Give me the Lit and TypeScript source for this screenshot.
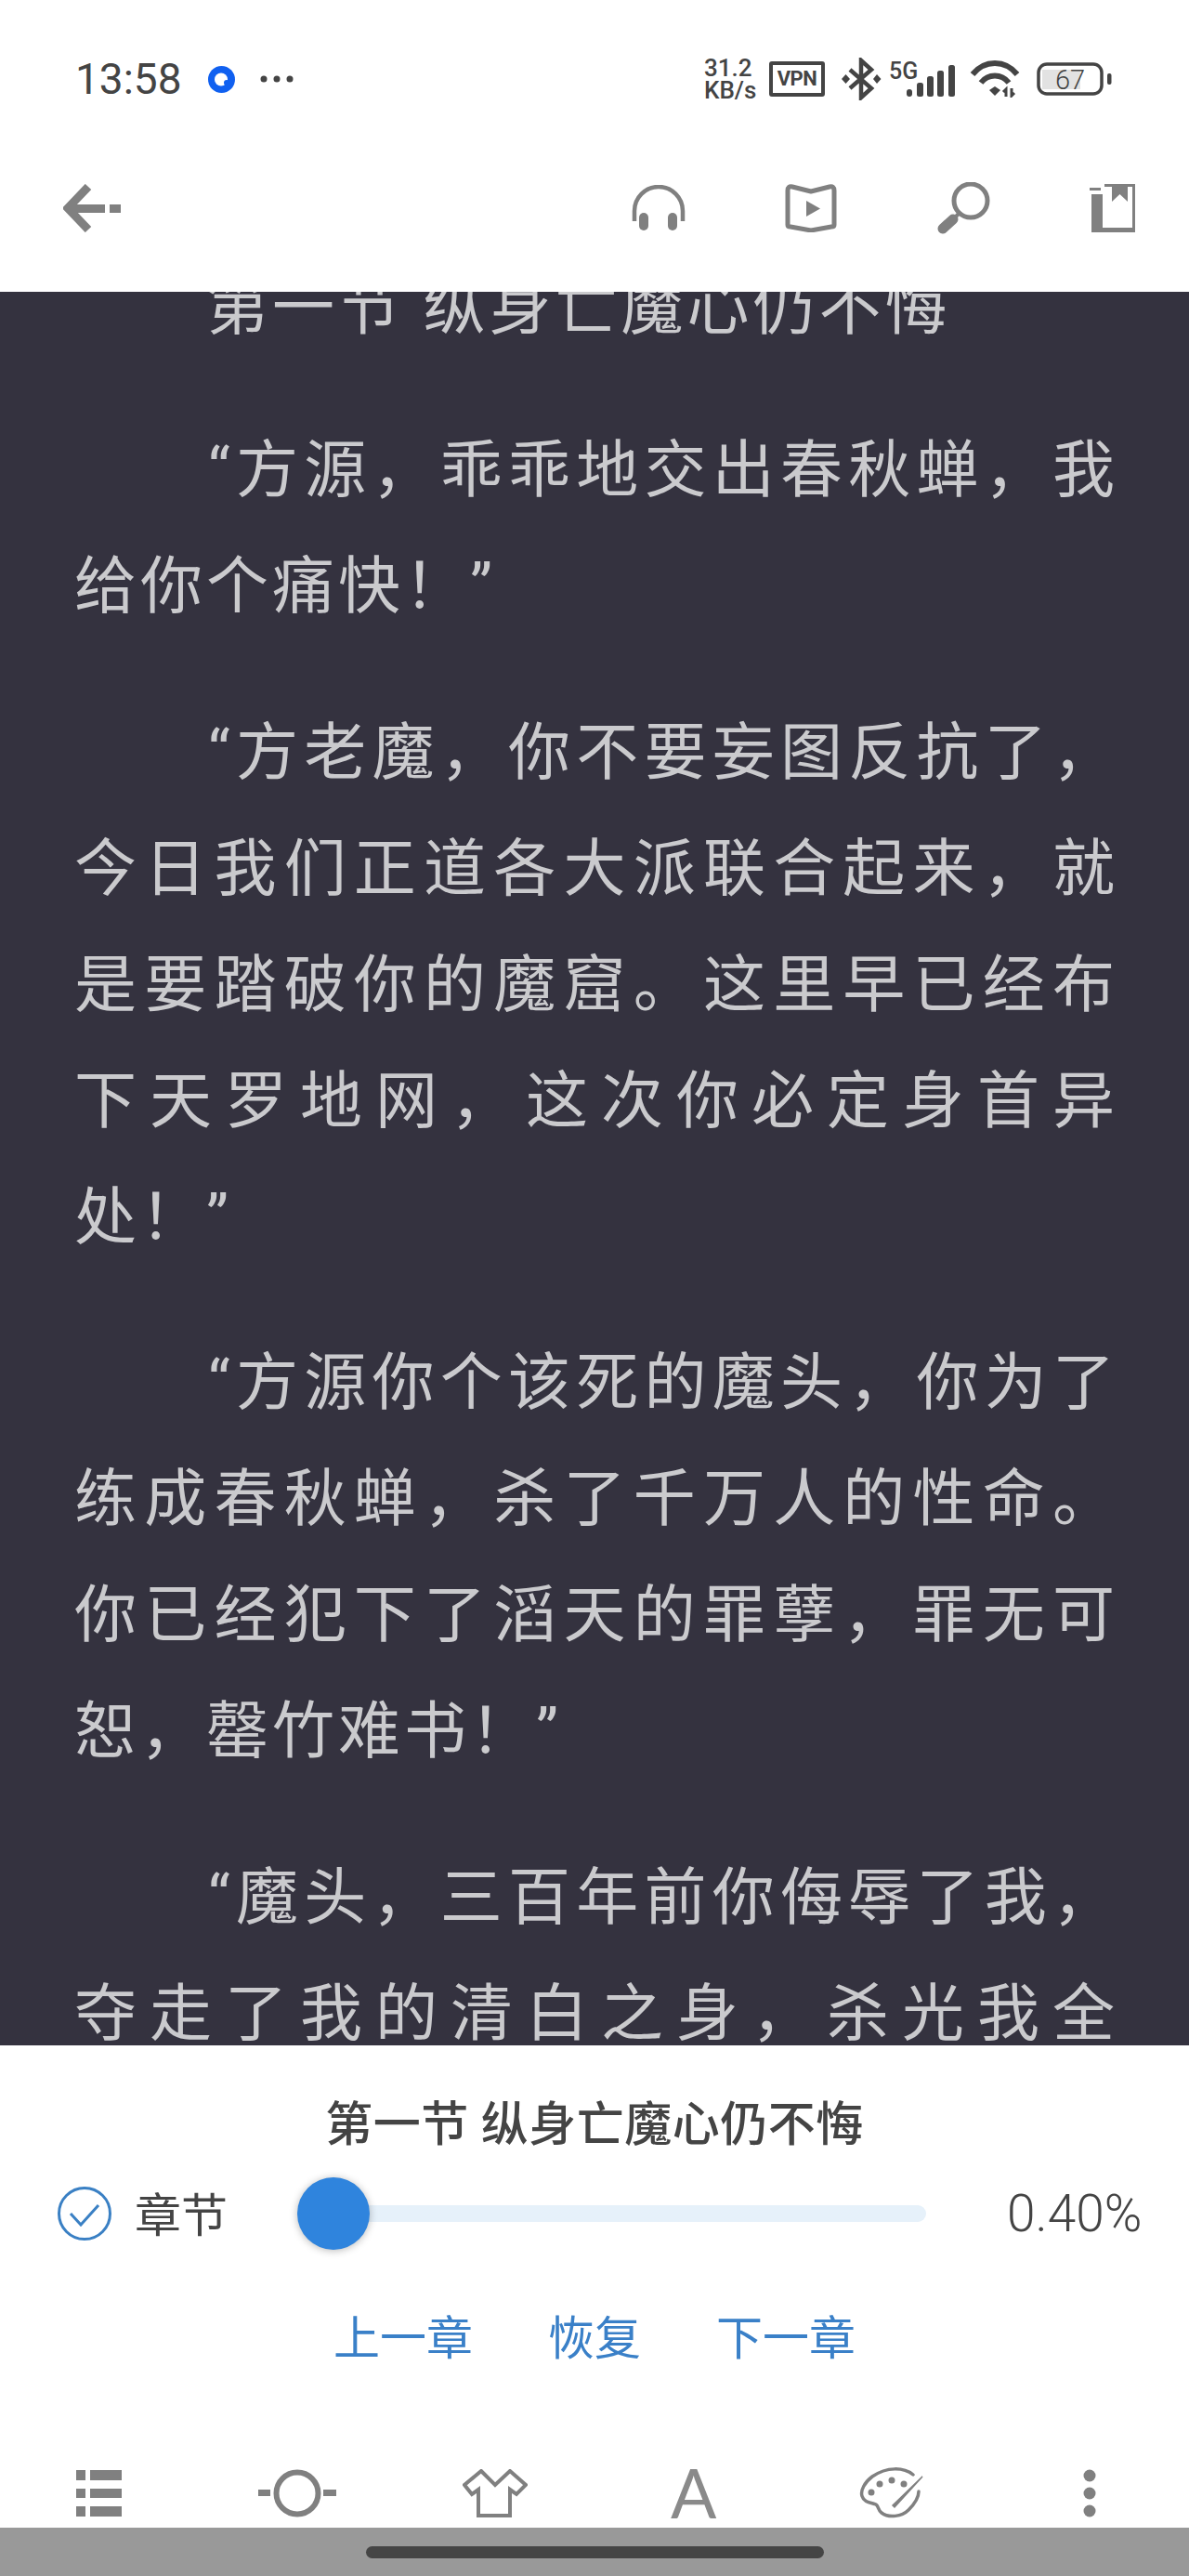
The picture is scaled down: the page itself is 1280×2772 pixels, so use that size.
import { LitElement, css, html, svg } from "lit";
import { customElement } from "lit/decorators.js";

// each paragraph is kept as its visual lines, the last one is not justified
const PARAGRAPHS: string[][] = [
  ["“方源，乖乖地交出春秋蝉，我", "给你个痛快！”"],
  ["“方老魔，你不要妄图反抗了，", "今日我们正道各大派联合起来，就", "是要踏破你的魔窟。这里早已经布", "下天罗地网，这次你必定身首异", "处！”"],
  ["“方源你个该死的魔头，你为了", "练成春秋蝉，杀了千万人的性命。", "你已经犯下了滔天的罪孽，罪无可", "恕，罄竹难书！”"],
  ["“魔头，三百年前你侮辱了我，", "夺走了我的清白之身，杀光我全"],
];

const icon = (w: number, h: number, body: unknown) => html`<svg width=${w} height=${h} viewBox="0 0 ${w} ${h}" fill="none">${body}</svg>`;

const ICONS = {
  bluetooth: icon(44, 46, svg`
    <path d="M10 13 L33 33 L22 43 V3 L33 13 L10 33" stroke="#444" stroke-width="4.500" stroke-linejoin="miter"/>
    <path d="M1 23 L5.5 18 L10 23 L5.5 28Z M35 23 L39 18 L43.500 23 L39 28Z" fill="#444"/>`),
  signal: icon(72, 54, svg`
    <text x="0" y="27" font-family="Roboto" font-size="25" font-weight="500" fill="#444">5G</text>
    <rect x="19" y="38" width="6" height="8" rx="3" fill="#444"/>
    <rect x="30" y="31" width="7" height="15" rx="2.500" fill="#444"/>
    <rect x="41" y="24" width="7" height="22" rx="2.500" fill="#444"/>
    <rect x="52" y="18" width="7" height="28" rx="2.500" fill="#444"/>
    <rect x="64" y="12" width="7" height="34" rx="2.500" fill="#444"/>`),
  wifi: icon(54, 40, svg`
    <path d="M3 15 C16 -1 38 -1 51 15" stroke="#444" stroke-width="6"/>
    <path d="M12 24 C20 14 34 14 42 24" stroke="#444" stroke-width="6"/>
    <path d="M21 32 L27 28 L33 32 L27 38Z" fill="#444"/>
    <path d="M39 39 V31 L36 34 M45 30 V38 L48 35" stroke="#444" stroke-width="3"/>`),
  battery: icon(81, 36, svg`
    <rect x="6" y="8" width="41" height="21" fill="#e2e2e2"/>
    <rect x="2" y="2" width="68" height="32" rx="9" stroke="#444" stroke-width="3.500"/>
    <text x="20" y="29" font-family="Roboto" font-size="29" font-weight="300" fill="#444">67</text>
    <rect x="76" y="12" width="4.500" height="12" rx="2" fill="#444"/>`),
  back: icon(62, 52, svg`
    <path d="M27 3 L5 26 L27 49" stroke="#808080" stroke-width="9"/>
    <path d="M7 22 H45 V31 H7Z M50 22 H62 V31 H50Z" fill="#808080"/>`),
  headphones: icon(58, 50, svg`
    <path d="M3 39 V28 A26 26 0 0 1 55 28 V39" stroke="#808080" stroke-width="4.500"/>
    <rect x="8" y="30" width="10" height="19" rx="5" fill="#808080"/>
    <rect x="39" y="30" width="10" height="19" rx="5" fill="#808080"/>`),
  book: icon(56, 52, svg`
    <path d="M3 7 Q3 2 8 3 L28 8 L48 3 Q53 2 53 7 V44 Q53 46 50 46 L28 50 L6 46 Q3 46 3 44Z" stroke="#808080" stroke-width="5" stroke-linejoin="round"/>
    <path d="M23 18 L38 26.500 L23 35Z" fill="#808080"/>`),
  search: icon(58, 57, svg`
    <circle cx="37" cy="20" r="18" stroke="#808080" stroke-width="5"/>
    <path d="M25 33 L16 42" stroke="#808080" stroke-width="4"/>
    <path d="M18 40 L7 50" stroke="#808080" stroke-width="11" stroke-linecap="round"/>`),
  bookmark: icon(50, 52, svg`
    <path d="M0 4 H12 V7 H0Z M2 11 H14 V47 H46 V3 H41 V19 L32.500 11 L24 19 V3 H16 V0 H49 V52 H2Z" fill="#808080"/>`),
  check: icon(58, 58, svg`
    <circle cx="29" cy="29" r="27.500" stroke="#3a80c4" stroke-width="3"/>
    <path d="M14 29 L25 41 L44 20" stroke="#3a80c4" stroke-width="3"/>`),
  list: icon(50, 50, svg`
    <path d="M0 0 H10 V11 H0Z M15 0 H49 V11 H15Z M0 20 H10 V30 H0Z M15 20 H49 V30 H15Z M0 39 H10 V50 H0Z M15 39 H49 V50 H15Z" fill="#808080"/>`),
  brightness: icon(84, 52, svg`
    <circle cx="42" cy="26" r="22.500" stroke="#808080" stroke-width="6"/>
    <path d="M0 22 H13 V29 H0Z M70 22 H84 V29 H70Z" fill="#808080"/>`),
  shirt: icon(70, 52, svg`
    <path d="M20 2 L35 17 L51 2 L68 17 L58 27 L51 22 V50 H17 V22 L10 27 L2 17Z" stroke="#808080" stroke-width="4"/>`),
  palette: icon(70, 56, svg`
    <path d="M58 8 C48 0 30 -1 14 10 C6 16 1 25 3 31 C5 38 13 38 18 40 C21 42 20 46 24 49 C32 55 46 53 53 46 C60 39 64 33 64 26" stroke="#808080" stroke-width="3.500" stroke-linecap="round"/>
    <circle cx="13" cy="27" r="3.500" fill="#808080"/>
    <circle cx="22" cy="18" r="3.500" fill="#808080"/>
    <circle cx="35" cy="14" r="3.500" fill="#808080"/>
    <circle cx="48" cy="18" r="3.500" fill="#808080"/>
    <path d="M68 10 L36 41 L38 43Z" fill="#808080" stroke="#808080" stroke-width="1.500"/>`),
  dots: icon(14, 52, svg`
    <circle cx="7" cy="7" r="6.500" fill="#808080"/>
    <circle cx="7" cy="26" r="6.500" fill="#808080"/>
    <circle cx="7" cy="45" r="6.500" fill="#808080"/>`),
  appDot: icon(29, 29, svg`
    <circle cx="14.500" cy="14.500" r="14.500" fill="#1060f0"/>
    <circle cx="14" cy="14.500" r="7" fill="#fff"/>
    <circle cx="20" cy="18" r="3" fill="#1060f0"/>`),
  more: icon(36, 8, svg`
    <circle cx="4" cy="4" r="3.500" fill="#444"/>
    <circle cx="18" cy="4" r="3.500" fill="#444"/>
    <circle cx="32" cy="4" r="3.500" fill="#444"/>`),
};

@customElement("app-root")
export class AppRoot extends LitElement {
  static styles = css`
    :host {
      display: block;
      width: 1280px;
      height: 2772px;
      overflow: hidden;
      background: #fff;
      font-family: Roboto, "Noto Sans CJK SC", sans-serif;
    }
    svg {
      display: block;
      flex: none;
    }
    .page {
      display: flex;
      flex-direction: column;
      height: 2772px;
    }

    /* status bar */
    .status {
      display: flex;
      align-items: center;
      height: 170px;
      padding-left: 81px;
      color: #444;
    }
    .time {
      font-size: 46px;
      width: 143px;
    }
    .more {
      margin-left: 27px;
    }
    .spacer {
      flex: 1;
    }
    .speed {
      font-size: 26px;
      font-weight: 500;
      line-height: 24px;
      width: 70px;
    }
    .vpn {
      box-sizing: border-box;
      width: 60px;
      height: 38px;
      border: 4px solid #444;
      border-radius: 3px;
      font-size: 22px;
      font-weight: 700;
      line-height: 30px;
      text-align: center;
      letter-spacing: -0.5px;
    }
    .status-icons {
      display: flex;
      align-items: center;
      padding-right: 83px;
    }
    .bt {
      margin-left: 17px;
    }
    .sig {
      margin-left: 8px;
    }
    .wifi {
      margin-left: 15px;
    }
    .bat {
      margin-left: 18px;
    }

    /* top toolbar */
    .toolbar {
      display: flex;
      align-items: center;
      justify-content: space-between;
      height: 108px;
      padding: 0 57px 36px 68px;
    }
    .tools {
      display: flex;
      align-items: center;
      gap: 107px;
    }

    /* reading area */
    .reader {
      height: 1887px;
      overflow: hidden;
      background: #34323f;
      color: #cacacd;
      font-size: 67px;
      letter-spacing: 4px;
      line-height: 125px;
      padding: 0 76px 0 80px;
    }
    .chapter {
      margin: -45px 0 50px;
      padding-left: 142px;
    }
    .para {
      margin-bottom: 53.500px;
    }
    .line {
      white-space: nowrap;
    }
    .line.fill {
      white-space: normal;
      text-align: justify;
      text-align-last: justify;
    }
    .line.first {
      padding-left: 144px;
    }

    /* bottom panel */
    .panel {
      flex: 1;
      display: flex;
      flex-direction: column;
      color: #444;
    }
    .panel-title {
      height: 60px;
      margin-top: 56px;
      font-size: 51px;
      font-weight: 500;
      letter-spacing: 0.5px;
      line-height: 60px;
      text-align: center;
    }
    .progress {
      display: flex;
      align-items: center;
      height: 80px;
      margin-top: 25px;
      padding-left: 62px;
    }
    .progress-label {
      font-size: 50px;
      margin: -4px 0 0 25px;
      width: 175px;
    }
    .slider {
      position: relative;
      width: 677px;
      height: 18px;
      border-radius: 9px;
      background: #e6f1fa;
    }
    .thumb {
      position: absolute;
      left: 0;
      top: -30px;
      width: 78px;
      height: 78px;
      border-radius: 50%;
      background: #2f84dd;
      box-shadow: 0 1px 8px rgba(0, 0, 0, 0.28);
    }
    .percent {
      margin-left: 87px;
      font-size: 55px;
      font-weight: 300;
    }
    .chapter-links {
      display: flex;
      justify-content: center;
      gap: 81px;
      height: 60px;
      margin-top: 65px;
      color: #3a80c8;
      font-size: 50px;
      line-height: 60px;
    }
    .menu {
      display: grid;
      grid-template-columns: repeat(6, 1fr);
      align-items: center;
      justify-items: center;
      height: 65px;
      margin-top: 103px;
    }
    .font-a {
      font-family: Lato, sans-serif;
      font-size: 73px;
      font-weight: 400;
      line-height: 65px;
      color: #8a8a8a;
    }

    /* gesture bar */
    .nav {
      display: flex;
      justify-content: center;
      align-items: center;
      height: 52px;
      background: #999;
    }
    .handle {
      width: 493px;
      height: 13px;
      border-radius: 7px;
      background: #454545;
    }
  `;

  render() {
    return html`
      <div class="page">
        <div class="status">
          <span class="time">13:58</span>
          ${ICONS.appDot}
          <span class="more">${ICONS.more}</span>
          <span class="spacer"></span>
          <div class="status-icons">
            <div class="speed">31.2<br />KB/s</div>
            <div class="vpn">VPN</div>
            <span class="bt">${ICONS.bluetooth}</span>
            <span class="sig">${ICONS.signal}</span>
            <span class="wifi">${ICONS.wifi}</span>
            <span class="bat">${ICONS.battery}</span>
          </div>
        </div>
        <div class="toolbar">
          ${ICONS.back}
          <div class="tools">
            ${ICONS.headphones} ${ICONS.book} ${ICONS.search} ${ICONS.bookmark}
          </div>
        </div>
        <div class="reader">
          <div class="chapter">第一节 纵身亡魔心仍不悔</div>
          ${PARAGRAPHS.map(
            (lines, p) => html`
              <div class="para">
                ${lines.map((text, i) => {
                  const last = i === lines.length - 1 && p !== PARAGRAPHS.length - 1;
                  return html`<div class="line ${last ? "" : "fill"} ${i === 0 ? "first" : ""}">${text}</div>`;
                })}
              </div>
            `
          )}
        </div>
        <div class="panel">
          <div class="panel-title">第一节 纵身亡魔心仍不悔</div>
          <div class="progress">
            ${ICONS.check}
            <span class="progress-label">章节</span>
            <div class="slider"><div class="thumb"></div></div>
            <span class="percent">0.40%</span>
          </div>
          <div class="chapter-links">
            <span>上一章</span>
            <span>恢复</span>
            <span>下一章</span>
          </div>
          <div class="menu">
            ${ICONS.list} ${ICONS.brightness} ${ICONS.shirt}
            <span class="font-a">A</span>
            ${ICONS.palette} ${ICONS.dots}
          </div>
        </div>
        <div class="nav"><div class="handle"></div></div>
      </div>
    `;
  }
}
